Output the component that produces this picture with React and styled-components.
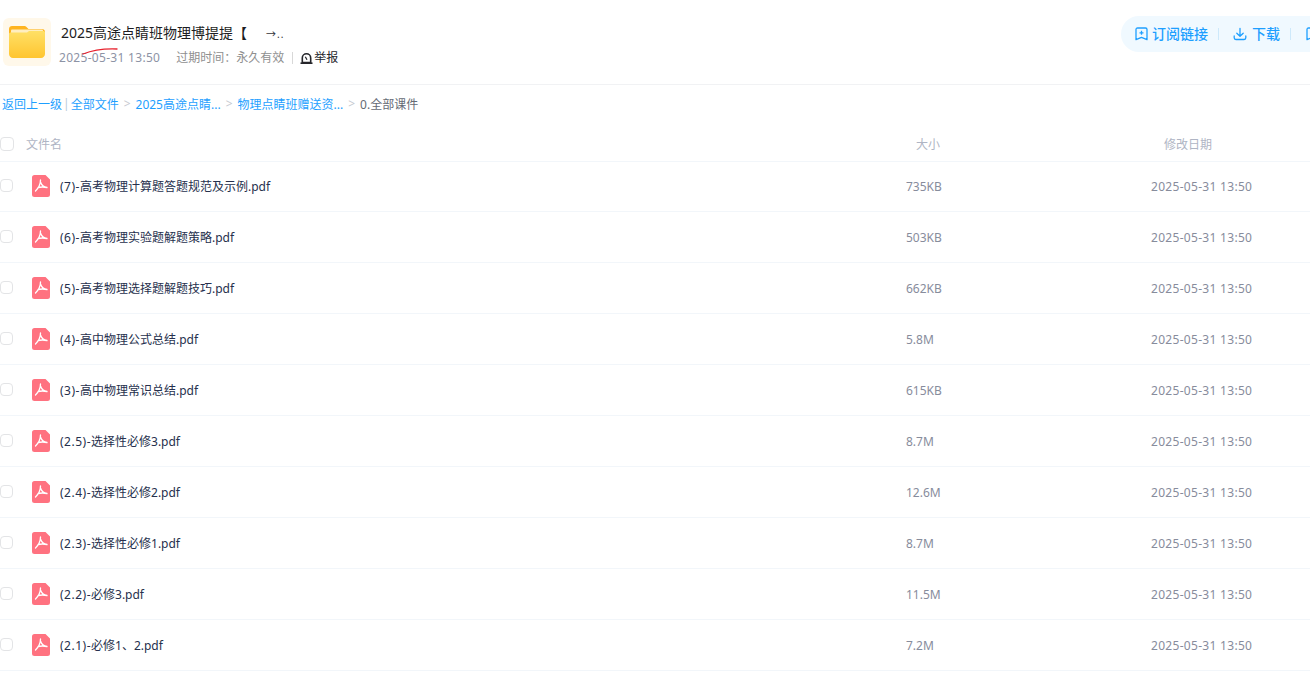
import React from 'react';
import styled, { createGlobalStyle } from 'styled-components';

const GlobalStyle = createGlobalStyle`
  html, body {
    margin: 0;
    height: 100%;
    background: #fff;
    overflow: hidden;
  }
  body {
    font-family: "Noto Sans", "Noto Sans CJK SC", sans-serif;
    font-size: 12px;
  }
`;

const Page = styled.div`
  width: 1310px;
  height: 694px;
  overflow: hidden;
`;

const Header = styled.header`
  display: flex;
  align-items: flex-start;
  height: 85px;
  padding: 18px 0 0 3px;
  box-sizing: border-box;
  border-bottom: 1px solid #f1f2f4;
`;

const FolderTile = styled.div`
  display: flex;
  align-items: center;
  justify-content: center;
  width: 48px;
  height: 48px;
  margin-right: 8px;
  border-radius: 6px;
  background: #fff8ea;
  flex-shrink: 0;
`;

const Info = styled.div`
  position: relative;
  display: flex;
  flex-direction: column;
`;

const Title = styled.div`
  display: flex;
  align-items: center;
  height: 30px;
  margin-left: 2px;
  font-size: 14px;
  line-height: 30px;
  color: #1d1d22;
`;

const Bracket = styled.span`
  margin-left: 0;
`;

const Cut = styled.span`
  margin: 1px 0 0 19px;
  font-size: 10px;
  letter-spacing: 1px;
  color: #33343a;
`;

const Meta = styled.div`
  display: flex;
  align-items: center;
  height: 18px;
  margin-top: 1px;
  color: #8d93a5;
  line-height: 18px;
`;

const MetaDate = styled.span`
  letter-spacing: 0.3px;
`;

const Expiry = styled.span`
  margin-left: 16px;
  color: #8f8f8f;
`;

const MetaLine = styled.span`
  width: 1px;
  height: 12px;
  margin: 0 7px 0 8px;
  background: #d8d8d8;
`;

const Report = styled.span`
  display: flex;
  align-items: center;
  gap: 1px;
  color: #25262b;
`;

const Scribble = styled.svg`
  position: absolute;
  left: 20px;
  top: 29px;
`;

const Actions = styled.div`
  display: flex;
  align-items: center;
  margin: -2px 0 0 auto;
  width: 189px;
  height: 36px;
  padding-left: 14px;
  box-sizing: border-box;
  border-radius: 18px 0 0 18px;
  background: #f0f9ff;
  overflow: hidden;
  flex-shrink: 0;
`;

const Action = styled.span`
  display: flex;
  align-items: center;
  gap: ${props => props.gap}px;
  font-size: 14px;
  line-height: 20px;
  font-weight: 500;
  color: #1e9fff;
  white-space: nowrap;
  flex-shrink: 0;
`;

const ActionLine = styled.span`
  width: 1px;
  height: 12px;
  margin: 0 ${props => props.right}px 0 ${props => props.left}px;
  background: #cde9fb;
  flex-shrink: 0;
`;

const Crumbs = styled.nav`
  display: flex;
  align-items: center;
  height: 39px;
  padding: 0 0 2px 2px;
  box-sizing: border-box;
  color: #1e9fff;
  white-space: nowrap;
`;

const Divider = styled.span`
  margin: 0 1px;
  color: #b9c9d8;
`;

const Chevron = styled.span`
  margin: 0 5px;
  color: #c6cad1;
`;

const Current = styled.span`
  color: #666b75;
`;

const Grid = styled.div`
  display: grid;
  grid-template-columns: 906px 245px 1fr;
  align-items: center;
  height: 51px;
  box-sizing: border-box;
  border-bottom: 1px solid #f2f6fa;
`;

const HeadGrid = styled(Grid)`
  height: 38px;
  padding-top: 2px;
  margin-bottom: -1px;
`;

const NameCell = styled.div`
  display: flex;
  align-items: center;
`;

const HeadCell = styled.div`
  padding-left: ${props => props.inset}px;
  color: #afb5c4;
`;

const HeadName = styled.span`
  margin-left: 12px;
  color: #afb5c4;
`;

const Check = styled.span`
  display: block;
  width: ${props => props.size}px;
  height: ${props => props.size}px;
  margin-top: ${props => props.top}px;
  border: 1px solid #e3e4e6;
  border-radius: 4px;
  box-sizing: border-box;
  flex-shrink: 0;
`;

const FileIcon = styled.svg`
  margin-left: 19px;
  flex-shrink: 0;
`;

const FileName = styled.span`
  margin-left: 10px;
  color: #26304d;
`;

const Prefix = styled.span`
  letter-spacing: 0.5px;
`;

const Value = styled.span`
  color: #878c9c;
`;

const DateValue = styled(Value)`
  letter-spacing: 0.3px;
`;

const FolderIcon = () => (
  <svg width="36" height="32" viewBox="0 0 36 32">
    <defs>
      <linearGradient id="folderFront" x1="0" y1="0" x2="0" y2="1">
        <stop offset="0" stopColor="#ffe066" />
        <stop offset="1" stopColor="#ffc530" />
      </linearGradient>
    </defs>
    <path d="M3 0h12c1.500 0 2.300.6 3.200 1.700L19.500 3H33c1.700 0 3 1.300 3 3v8H0V3c0-1.700 1.300-3 3-3z" fill="#ffb41f" />
    <rect x="2" y="3.500" width="32" height="4" rx="1" fill="#ffeec0" />
    <path d="M0 8c0-1 .8-1.500 1.800-1.500H18L20 5h14.200c1 0 1.800.5 1.800 1.500V28c0 2.200-1.800 4-4 4H4c-2.200 0-4-1.800-4-4z" fill="url(#folderFront)" />
  </svg>
);

const ReportIcon = () => (
  <svg width="13" height="13" viewBox="0 0 13 13">
    <path d="M2.300 10.500V6a4.200 4.200 0 0 1 8.400 0v4.500z" fill="none" stroke="#25262b" strokeWidth="1.600" />
    <path d="M.5 11.200h12" stroke="#25262b" strokeWidth="1.600" />
    <path d="M5.300 4.700l1.700 3" stroke="#25262b" strokeWidth="1.300" />
  </svg>
);

const SubscribeIcon = () => (
  <svg width="13" height="14" viewBox="0 0 13 14" fill="none" stroke="#1e9fff" strokeWidth="1.300">
    <path d="M1 2.500C1 1.500 1.600 1 2.500 1h8c.9 0 1.500.5 1.500 1.500V12.700L6.500 10.300 1 12.700z" strokeLinejoin="round" />
    <path d="M6.500 3.800v4M4.500 5.800h4" />
  </svg>
);

const DownloadIcon = () => (
  <svg width="14" height="14" viewBox="0 0 14 14" fill="none" stroke="#1e9fff" strokeWidth="1.300" strokeLinecap="round" strokeLinejoin="round">
    <path d="M7 1.500v7.700M3.800 6.200 7 9.300l3.200-3.100" />
    <path d="M1.200 9v1.800c0 1 .7 1.700 1.700 1.700h8.200c1 0 1.700-.7 1.700-1.700V9" />
  </svg>
);

const PdfIcon = () => (
  <FileIcon width="18" height="22" viewBox="0 0 18 22">
    <path d="M2.500 0H13.500L18 4.500v15a2.500 2.500 0 0 1-2.500 2.500h-13A2.500 2.500 0 0 1 0 19.500v-17A2.500 2.500 0 0 1 2.500 0z" fill="#ff7280" />
    <path d="M8.500 5C8.500 8 6.500 13 3.500 16M8.500 7c1 3 3.500 5 6.500 5.500M6 12.700c2.500-.9 5-1 9-.2" fill="none" stroke="#fff" strokeWidth="1.300" strokeLinecap="round" />
  </FileIcon>
);

const files = [
  ['(7)-', '高考物理计算题答题规范及示例.pdf', '735KB'],
  ['(6)-', '高考物理实验题解题策略.pdf', '503KB'],
  ['(5)-', '高考物理选择题解题技巧.pdf', '662KB'],
  ['(4)-', '高中物理公式总结.pdf', '5.8M'],
  ['(3)-', '高中物理常识总结.pdf', '615KB'],
  ['(2.5)-', '选择性必修3.pdf', '8.7M'],
  ['(2.4)-', '选择性必修2.pdf', '12.6M'],
  ['(2.3)-', '选择性必修1.pdf', '8.7M'],
  ['(2.2)-', '必修3.pdf', '11.5M'],
  ['(2.1)-', '必修1、2.pdf', '7.2M'],
];

const App = () => (
  <Page>
    <GlobalStyle />
    <Header>
      <FolderTile>
        <FolderIcon />
      </FolderTile>
      <Info>
        <Title>
          2025高途点睛班物理博提提
          <Bracket>【</Bracket>
          <Cut>→..</Cut>
        </Title>
        <Meta>
          <MetaDate>2025-05-31 13:50</MetaDate>
          <Expiry>过期时间：永久有效</Expiry>
          <MetaLine />
          <Report>
            <ReportIcon />
            举报
          </Report>
        </Meta>
        <Scribble width="40" height="10" viewBox="0 0 40 10">
          <path d="M4 7C14 3 26 1.500 38 2" fill="none" stroke="#e8232f" strokeWidth="1.300" strokeLinecap="round" />
        </Scribble>
      </Info>
      <Actions>
        <Action gap={4}>
          <SubscribeIcon />
          订阅链接
        </Action>
        <ActionLine left={10} right={14} />
        <Action gap={5}>
          <DownloadIcon />
          下载
        </Action>
        <ActionLine left={10} right={15} />
        <Action gap={4}>
          <SubscribeIcon />
        </Action>
      </Actions>
    </Header>
    <Crumbs>
      返回上一级
      <Divider>|</Divider>
      全部文件
      <Chevron>&gt;</Chevron>
      2025高途点睛...
      <Chevron>&gt;</Chevron>
      物理点睛班赠送资...
      <Chevron>&gt;</Chevron>
      <Current>0.全部课件</Current>
    </Crumbs>
    <HeadGrid>
      <NameCell>
        <Check size={14} top={1} />
        <HeadName>文件名</HeadName>
      </NameCell>
      <HeadCell inset={10}>大小</HeadCell>
      <HeadCell inset={13}>修改日期</HeadCell>
    </HeadGrid>
    {files.map(([prefix, name, size]) => (
      <Grid key={prefix}>
        <NameCell>
          <Check size={13} top={-2} />
          <PdfIcon />
          <FileName>
            <Prefix>{prefix}</Prefix>
            {name}
          </FileName>
        </NameCell>
        <Value>{size}</Value>
        <DateValue>2025-05-31 13:50</DateValue>
      </Grid>
    ))}
  </Page>
);

export default App;
